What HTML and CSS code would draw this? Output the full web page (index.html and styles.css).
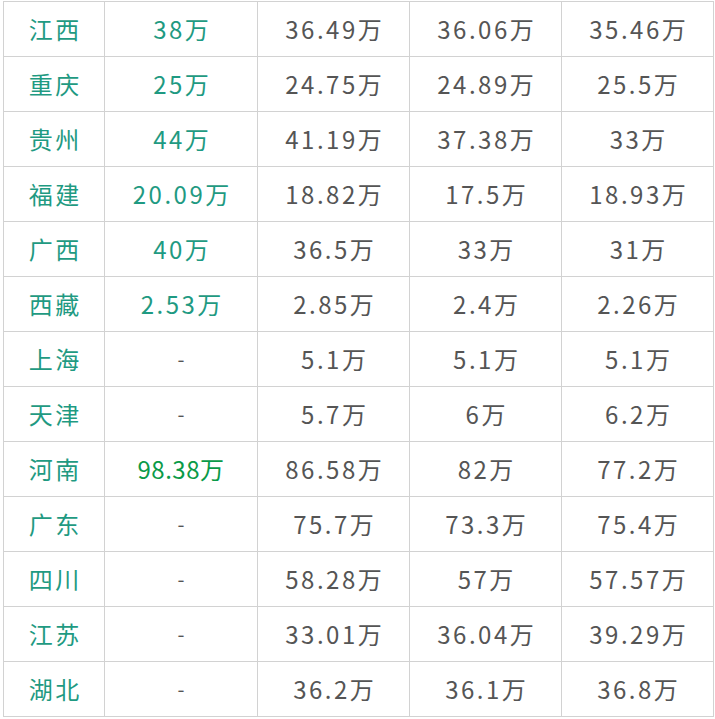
FILE: index.html
```html
<!DOCTYPE html>
<html lang="zh-CN">
<head>
<meta charset="utf-8">
<title>各省数据</title>
<link rel="stylesheet" href="styles.css">
</head>
<body>
<table class="data">
<colgroup>
<col class="c1"><col class="c2"><col class="c3"><col class="c4"><col class="c5">
</colgroup>
<tbody>
<tr><td class="name">江西</td><td class="hl">38万</td><td>36.49万</td><td>36.06万</td><td>35.46万</td></tr>
<tr><td class="name">重庆</td><td class="hl">25万</td><td>24.75万</td><td>24.89万</td><td>25.5万</td></tr>
<tr><td class="name">贵州</td><td class="hl">44万</td><td>41.19万</td><td>37.38万</td><td>33万</td></tr>
<tr><td class="name">福建</td><td class="hl">20.09万</td><td>18.82万</td><td>17.5万</td><td>18.93万</td></tr>
<tr><td class="name">广西</td><td class="hl">40万</td><td>36.5万</td><td>33万</td><td>31万</td></tr>
<tr><td class="name">西藏</td><td class="hl">2.53万</td><td>2.85万</td><td>2.4万</td><td>2.26万</td></tr>
<tr><td class="name">上海</td><td class="dash">-</td><td>5.1万</td><td>5.1万</td><td>5.1万</td></tr>
<tr><td class="name">天津</td><td class="dash">-</td><td>5.7万</td><td>6万</td><td>6.2万</td></tr>
<tr><td class="name">河南</td><td class="hl2">98.38万</td><td>86.58万</td><td>82万</td><td>77.2万</td></tr>
<tr><td class="name">广东</td><td class="dash">-</td><td>75.7万</td><td>73.3万</td><td>75.4万</td></tr>
<tr><td class="name">四川</td><td class="dash">-</td><td>58.28万</td><td>57万</td><td>57.57万</td></tr>
<tr><td class="name">江苏</td><td class="dash">-</td><td>33.01万</td><td>36.04万</td><td>39.29万</td></tr>
<tr><td class="name">湖北</td><td class="dash">-</td><td>36.2万</td><td>36.1万</td><td>36.8万</td></tr>
</tbody>
</table>
</body>
</html>
```
FILE: styles.css
```css
html, body {
  margin: 0;
  padding: 0;
  background: #fff;
}
body {
  padding: 1px 0 0 3px;
}
.data {
  border-collapse: collapse;
  table-layout: fixed;
  width: 710px;
  font-family: "Noto Sans CJK SC", "Noto Sans", sans-serif;
  font-size: 24px;
  color: #555;
}
.c1 { width: 101px; }
.c2 { width: 153px; }
.c3 { width: 152px; }
.c4 { width: 152px; }
.c5 { width: 152px; }
.data td {
  border: 1px solid #d2d2d2;
  height: 54px;
  padding: 0;
  text-align: center;
  vertical-align: middle;
  letter-spacing: 2.5px;
  text-indent: 2.5px;
  line-height: 1;
}
.data td.name {
  color: #1f9a82;
}
.data td.hl {
  color: #1f9a82;
}
.data td.hl2 {
  color: #0a9a48;
  letter-spacing: 0.5px;
  text-indent: 0;
}
.data td.dash {
  font-size: 20px;
}
```
